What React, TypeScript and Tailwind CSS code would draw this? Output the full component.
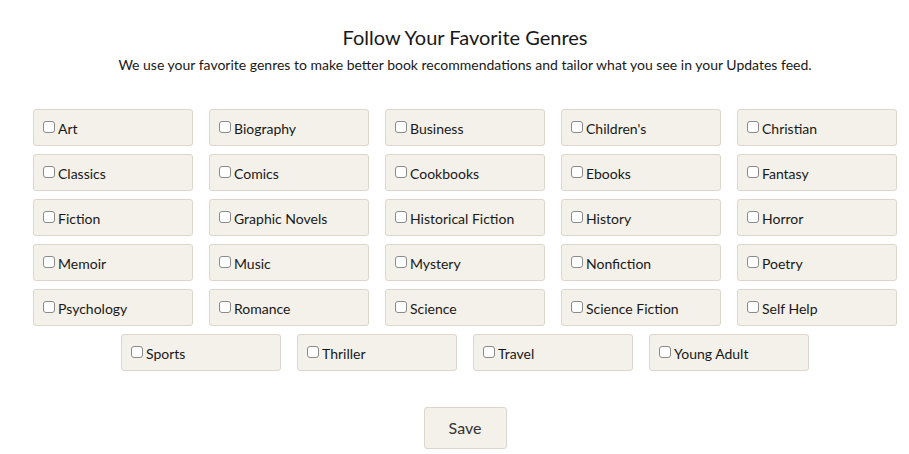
import React from 'react';

const GENRES = [
  'Art', 'Biography', 'Business', "Children's", 'Christian',
  'Classics', 'Comics', 'Cookbooks', 'Ebooks', 'Fantasy',
  'Fiction', 'Graphic Novels', 'Historical Fiction', 'History', 'Horror',
  'Memoir', 'Music', 'Mystery', 'Nonfiction', 'Poetry',
  'Psychology', 'Romance', 'Science', 'Science Fiction', 'Self Help',
  'Sports', 'Thriller', 'Travel', 'Young Adult',
];

function GenreBox({ name }: { name: string }) {
  return (
    <label className="flex h-[37px] w-[160px] items-center rounded-[3px] border border-[#dcd6cc] bg-[#f4f1ea] pl-[9px] text-[14px] text-[#181818]">
      <input
        type="checkbox"
        className="mr-[3px] mt-[-1px] h-[12px] w-[12px] appearance-none rounded-[3px] border border-[#8a8a8a] bg-white checked:bg-[#4a4a4a]"
      />
      <span className="mt-[1px]">{name}</span>
    </label>
  );
}

export default function App() {
  return (
    <div className="min-h-screen bg-white font-['Lato','Liberation_Sans',sans-serif]">
      <div className="ml-[33px] flex w-[864px] flex-col items-center pt-[22px]">
        <h1 className="text-[20px] leading-[30px] text-[#181818]">Follow Your Favorite Genres</h1>
        <p className="mt-[3px] text-[14px] leading-[20px] text-[#181818]">
          We use your favorite genres to make better book recommendations and tailor what you see in your Updates feed.
        </p>

        <div className="mt-[34px] flex w-full flex-wrap justify-center gap-x-[16px] gap-y-[8px]">
          {GENRES.map((g) => (
            <GenreBox key={g} name={g} />
          ))}
        </div>

        <button className="mt-[36px] h-[42px] w-[83px] rounded-[3px] border border-[#dcd6cc] bg-[#f4f1ea] text-[16px] text-[#333333]">
          Save
        </button>
      </div>
    </div>
  );
}
